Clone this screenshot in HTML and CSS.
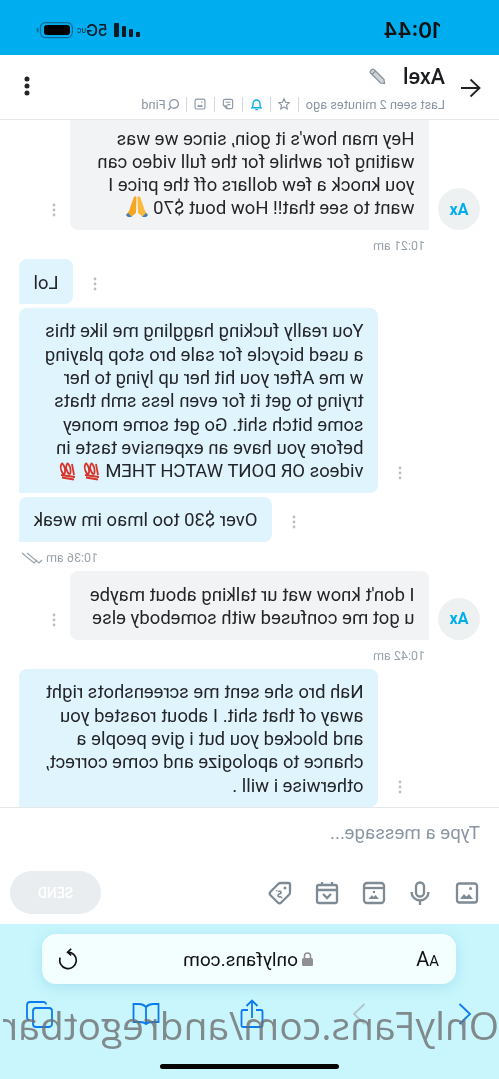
FILE: index.html
```html
<!DOCTYPE html>
<html lang="en">
<head>
    <meta charset="UTF-8">
    <meta name="viewport" content="width=device-width, initial-scale=1.0">
    <title>Axel - Chat</title>
    <link rel="stylesheet" href="styles.css">
</head>
<body>
<div class="phone">
    <div class="statusbar">
        <div class="clock">10:44</div>
        <div class="status-icons">
            <svg class="signal" width="27" height="14" viewBox="0 0 27 14"><rect x="0" y="9" width="4" height="5" rx="1"/><rect x="7" y="6" width="4" height="8" rx="1"/><rect x="14" y="3" width="4" height="11" rx="1"/><rect x="21" y="0" width="5" height="14" rx="1"/></svg>
            <div class="network">5G<span>UC</span></div>
            <svg class="battery" width="37" height="18" viewBox="0 0 37 18"><rect x="0.6" y="1.600" width="32" height="15" rx="5" fill="none" stroke="#0a6a96" stroke-width="1.100"/><rect x="3" y="4" width="26" height="10" rx="3" fill="#000"/><path d="M34.500 6.500c1.500.5 2 1.500 2 2.500s-.5 2-2 2.500z" fill="#0a6a96"/></svg>
        </div>
    </div>

    <div class="chat-header">
        <svg class="back" width="24" height="24" viewBox="0 0 24 24"><path d="M2 12h19M11.500 3.500 2.500 12l9 8.500" fill="none" stroke="#222" stroke-width="1.800"/></svg>
        <div class="who">
            <div class="name-row">
                <span class="name">Axel</span>
                <svg width="18" height="18" viewBox="0 0 18 18"><path d="M2 12.500 12 2.500a1.500 1.500 0 0 1 2 0l1.500 1.500a1.500 1.500 0 0 1 0 2l-10 10-4 .5zM10.500 4l3.500 3.500" fill="#cfd4d8" stroke="#8a9299" stroke-width="1.200"/></svg>
            </div>
            <div class="meta">
                <span class="seen">Last seen 2 minutes ago</span>
                <span class="meta-item"><svg width="14" height="14" viewBox="0 0 24 24"><path d="m12 3 2.700 6 6.300.7-4.700 4.300 1.300 6.500-5.600-3.300-5.600 3.300 1.300-6.500L3 9.700 9.300 9z" fill="none" stroke="#8a96a3" stroke-width="2"/></svg></span>
                <span class="meta-item"><svg width="15" height="16" viewBox="0 0 24 24"><path d="M5 18c1.500-2 1.500-4 1.500-7a5.500 5.500 0 0 1 11 0c0 3 0 5 1.500 7zM10 21h4" fill="none" stroke="#00aeef" stroke-width="2.200"/></svg></span>
                <span class="meta-item"><svg width="14" height="14" viewBox="0 0 24 24"><path d="M4 7a3 3 0 0 1 3-3h10a3 3 0 0 1 3 3v7l-6 6H7a3 3 0 0 1-3-3zM8 9h8M8 13h5M14 20v-5h6" fill="none" stroke="#8a96a3" stroke-width="2"/></svg></span>
                <span class="meta-item"><svg width="14" height="14" viewBox="0 0 24 24"><rect x="3.500" y="3.500" width="17" height="17" rx="3" fill="none" stroke="#8a96a3" stroke-width="2"/><path d="m7 17 3-4 2 2 2-2 3 4z" fill="#8a96a3"/><circle cx="9" cy="8.500" r="1.300" fill="#8a96a3"/></svg></span>
                <span class="meta-item find"><svg width="13" height="13" viewBox="0 0 24 24"><circle cx="11" cy="11" r="8" fill="none" stroke="#8a96a3" stroke-width="2.500"/><path d="m17 17 5 5" stroke="#8a96a3" stroke-width="2.500"/></svg>Find</span>
            </div>
        </div>
        <svg class="more" width="6" height="20" viewBox="0 0 6 20"><circle cx="3" cy="3" r="2.500"/><circle cx="3" cy="10" r="2.500"/><circle cx="3" cy="17" r="2.500"/></svg>
    </div>

    <div class="messages">
        <div class="msg incoming first">
            <div class="avatar">Ax</div>
            <div class="bubble">Hey man how's it goin, since we was waiting for awhile for the full video can you knock a few dollars off the price I want to see that!! How bout $70
                <svg class="emoji" width="24" height="24" viewBox="0 0 24 24"><path d="M11.500 3c-1-1.500-2.500-.5-3 1L4 17l-3 4 2 2h3l5-4z" fill="#f9b93c"/><path d="M12.500 3c1-1.500 2.500-.5 3 1L20 17l3 4-2 2h-3l-5-4z" fill="#f5a623"/><path d="m1 21 2-2 4 4H3zM23 21l-2-2-4 4h4z" fill="#3f7fc4"/></svg>
            </div>
            <svg class="dots" width="4" height="14" viewBox="0 0 4 14"><circle cx="2" cy="2" r="1.400"/><circle cx="2" cy="7" r="1.400"/><circle cx="2" cy="12" r="1.400"/></svg>
        </div>
        <div class="time incoming-time">10:21 am</div>

        <div class="msg outgoing">
            <svg class="dots" width="4" height="14" viewBox="0 0 4 14"><circle cx="2" cy="2" r="1.400"/><circle cx="2" cy="7" r="1.400"/><circle cx="2" cy="12" r="1.400"/></svg>
            <div class="bubble">Lol</div>
        </div>
        <div class="msg outgoing">
            <svg class="dots" width="4" height="14" viewBox="0 0 4 14"><circle cx="2" cy="2" r="1.400"/><circle cx="2" cy="7" r="1.400"/><circle cx="2" cy="12" r="1.400"/></svg>
            <div class="bubble wide">You really fucking haggling me like this a used bicycle for sale bro stop playing w me After you hit her up lying to her trying to get it for even less smh thats some bitch shit. Go get some money before you have an expensive taste in videos OR DONT WATCH THEM
                <svg class="emoji" width="24" height="20" viewBox="0 0 22 20"><path d="M4 3 2 14M7 4c-2 3-2 9-.5 9S11 7 9.500 4 8 3 7 4zM12.500 4c-2 3-2 9-.5 9s4.500-6 3-9-1.500-1-2.500 0zM1 16l14-2M2 18.500l12-2" fill="none" stroke="#d8352a" stroke-width="1.800"/></svg><svg class="emoji" width="24" height="20" viewBox="0 0 22 20"><path d="M4 3 2 14M7 4c-2 3-2 9-.5 9S11 7 9.500 4 8 3 7 4zM12.500 4c-2 3-2 9-.5 9s4.500-6 3-9-1.500-1-2.500 0zM1 16l14-2M2 18.500l12-2" fill="none" stroke="#d8352a" stroke-width="1.800"/></svg>
            </div>
        </div>
        <div class="msg outgoing">
            <svg class="dots" width="4" height="14" viewBox="0 0 4 14"><circle cx="2" cy="2" r="1.400"/><circle cx="2" cy="7" r="1.400"/><circle cx="2" cy="12" r="1.400"/></svg>
            <div class="bubble">Over $30 too lmao im weak</div>
        </div>
        <div class="time outgoing-time">10:36 am
            <svg width="22" height="12" viewBox="0 0 22 12"><path d="M21 1 9 11 6 8M16 1 4 11 1 8" fill="none" stroke="#9aa3ab" stroke-width="1.200"/></svg>
        </div>

        <div class="msg incoming">
            <div class="avatar">Ax</div>
            <div class="bubble">I don't know wat ur talking about maybe u got me confused with somebody else</div>
            <svg class="dots" width="4" height="14" viewBox="0 0 4 14"><circle cx="2" cy="2" r="1.400"/><circle cx="2" cy="7" r="1.400"/><circle cx="2" cy="12" r="1.400"/></svg>
        </div>
        <div class="time incoming-time">10:42 am</div>

        <div class="msg outgoing">
            <svg class="dots" width="4" height="14" viewBox="0 0 4 14"><circle cx="2" cy="2" r="1.400"/><circle cx="2" cy="7" r="1.400"/><circle cx="2" cy="12" r="1.400"/></svg>
            <div class="bubble wide">Nah bro she sent me screenshots right away of that shit. I about roasted you and blocked you but i give people a chance to apologize and come correct, otherwise i will .</div>
        </div>
    </div>

    <div class="composer">
        <div class="placeholder">Type a message...</div>
        <div class="composer-tools">
            <div class="tool-icons">
                <svg width="24" height="24" viewBox="0 0 24 24"><rect x="2" y="2.500" width="20" height="19" rx="2.500"/><path class="fill" d="m6 18 4-5 2.500 2.500L15 13l4 5z"/><circle class="fill" cx="8.500" cy="7.500" r="1.500"/></svg>
                <svg width="24" height="24" viewBox="0 0 24 24"><rect x="8" y="1.500" width="8" height="14" rx="4"/><path d="M3.500 11a8.500 8.500 0 0 0 17 0M12 19.500V24"/></svg>
                <svg width="24" height="24" viewBox="0 0 24 24"><rect x="2" y="2" width="20" height="20" rx="3"/><path d="M2 7h20"/><path class="fill" d="m7 18 3.500-4 2 2 1.500-2 3.500 4z"/><circle class="fill" cx="12" cy="11" r="1.200"/></svg>
                <svg width="24" height="24" viewBox="0 0 24 24"><rect x="2" y="4" width="20" height="18" rx="2"/><path d="M2 9h20M7 1v3M17 1v3M8 13l4 4 4-4"/></svg>
                <svg width="26" height="26" viewBox="0 0 26 26"><path d="M3 4.500C3 3.500 3.500 3 4.500 3h8c1 0 1.500.3 2 .8l8 8c1.200 1.200 1.200 2.200 0 3.400l-7.300 7.300c-1.200 1.200-2.200 1.200-3.400 0l-8-8c-.5-.5-.8-1-.8-2z"/><circle class="fill" cx="8" cy="8" r="1.500"/><path d="M14.800 11.800c-1-1-3-.5-2.800 1s2.800 1 3 2.500-2 2-3 1M11 18l.8-.8M15.800 11.200l.8-.8" stroke-width="1.700"/></svg>
            </div>
            <div class="send">SEND</div>
        </div>
    </div>

    <div class="browser">
        <div class="urlbar">
            <div class="aa"><small>A</small>A</div>
            <div class="address"><svg width="11" height="14" viewBox="0 0 11 14"><path d="M2.500 6V4a3 3 0 0 1 6 0v2" fill="none" stroke="#8f8f94" stroke-width="1.500"/><rect x="0" y="6" width="11" height="8" rx="1.500" fill="#8f8f94"/></svg>onlyfans.com</div>
            <svg class="reload" width="22" height="22" viewBox="0 0 24 24"><path d="M12 4.500a9 9 0 1 0 8.500 6M8.500 1l4 3.500-4 3.500" fill="none" stroke="#111" stroke-width="1.800"/></svg>
        </div>
        <div class="toolbar">
            <div class="tool"><svg width="14" height="24" viewBox="0 0 14 24"><path d="M12.500 2 2 12l10.500 10" fill="none" stroke="#0a7bf0" stroke-width="1.800"/></svg></div>
            <div class="tool"><svg width="14" height="24" viewBox="0 0 14 24"><path d="M1.500 2 12 12 1.500 22" fill="none" stroke="#b3c4c9" stroke-width="1.800"/></svg></div>
            <div class="tool"><svg width="24" height="30" viewBox="0 0 24 30"><path d="M12 19V2M6.500 7 12 1.500 17.500 7M8 11H3a1.500 1.500 0 0 0-1.500 1.500v14A1.500 1.500 0 0 0 3 28h18a1.500 1.500 0 0 0 1.500-1.500v-14A1.500 1.500 0 0 0 21 11h-5" fill="none" stroke="#0a7bf0" stroke-width="1.800"/></svg></div>
            <div class="tool"><svg width="28" height="24" viewBox="0 0 28 24"><path d="M14 5c-2-2-4-3-7-3H1.500v18H8c3 0 5 1 6 2 1-1 3-2 6-2h6.500V2H21c-3 0-5 1-7 3zM14 5v17" fill="none" stroke="#0a7bf0" stroke-width="1.800"/></svg></div>
            <div class="tool"><svg width="27" height="27" viewBox="0 0 27 27"><rect x="1" y="7" width="19" height="19" rx="3" fill="none" stroke="#0a7bf0" stroke-width="1.800"/><path d="M7 3.500A2.500 2.500 0 0 1 9.500 1H23a3 3 0 0 1 3 3v12.500a2.500 2.500 0 0 1-2.500 2.500" fill="none" stroke="#0a7bf0" stroke-width="1.800"/></svg></div>
        </div>
        <div class="home-bar"></div>
        <div class="watermark">OnlyFans.com/andregotbar</div>
    </div>
</div>
</body>
</html>
```

FILE: styles.css
```css
html, body {
    margin: 0;
    padding: 0;
    background: #fff;
}

/* the whole capture is flipped left to right */
.phone {
    width: 499px;
    height: 1079px;
    overflow: hidden;
    display: flex;
    flex-direction: column;
    font-family: Roboto, "Liberation Sans", sans-serif;
    color: #242529;
    transform: scaleX(-1);
}

.statusbar {
    height: 55px;
    flex-shrink: 0;
    background: #00aeef;
    display: flex;
    align-items: center;
    justify-content: space-between;
    padding: 5px 26px 0 58px;
    box-sizing: border-box;
}

.clock {
    font-family: Inter, sans-serif;
    font-size: 21px;
    font-weight: 600;
    color: #111;
}

.status-icons {
    display: flex;
    align-items: center;
    gap: 6px;
    margin-right: 10px;
}

.signal {
    fill: #0b1c26;
    margin-right: -1px;
}

.network {
    font-family: Inter, sans-serif;
    font-size: 16px;
    font-weight: 500;
    color: #0b1c26;
    display: flex;
    align-items: center;
}

.network span {
    font-size: 6px;
    width: 7px;
}

.chat-header {
    height: 65px;
    flex-shrink: 0;
    display: flex;
    align-items: center;
    padding: 0 24px 0 17px;
    box-sizing: border-box;
    border-bottom: 1px solid #e6e9eb;
}

.back {
    margin-right: 13px;
    margin-top: 2px;
}

.who {
    flex: 1;
}

.name-row {
    display: flex;
    align-items: center;
    gap: 17px;
    height: 27px;
}

.name {
    font-size: 21.500px;
    font-weight: 500;
    color: #1c1d20;
}

.meta {
    display: flex;
    align-items: center;
    font-size: 12.800px;
    color: #8a96a3;
    margin-top: 7px;
}

.seen {
    padding-right: 7px;
}

.meta-item {
    display: flex;
    align-items: center;
    justify-content: center;
    box-sizing: border-box;
    width: 28px;
    height: 15px;
    border-left: 1px solid #d4d9dd;
}

.find {
    width: auto;
    padding-left: 6px;
    gap: 1px;
}

.more {
    fill: #242529;
    margin-top: -2px;
}

.messages {
    height: 687px;
    flex-shrink: 0;
    overflow: hidden;
    display: flex;
    flex-direction: column;
}

.msg {
    display: flex;
    flex-shrink: 0;
    align-items: flex-end;
}

.msg.first {
    margin-top: -5px;
}

.bubble {
    font-size: 18.500px;
    line-height: 23.300px;
    padding: 12.500px 14.500px 9.500px;
    box-sizing: border-box;
}

/* keep the pictures from stretching their line */
.emoji {
    vertical-align: -4px;
    margin-top: -6px;
}

.dots {
    fill: #b8bfc5;
    flex-shrink: 0;
    margin-bottom: 13px;
}

.incoming {
    padding-left: 19px;
}

.avatar {
    width: 42px;
    height: 42px;
    flex-shrink: 0;
    border-radius: 50%;
    background: #eef1f2;
    color: #00aeef;
    font-size: 16px;
    font-weight: 700;
    display: flex;
    align-items: center;
    justify-content: center;
    margin-right: 9px;
}

.incoming .bubble {
    width: 359px;
    background: #f1f3f4;
    border-radius: 8px 8px 8px 0;
}

.incoming .dots {
    margin-left: 14px;
}

.outgoing {
    justify-content: flex-end;
    padding-right: 19px;
    margin-bottom: 3.500px;
}

.outgoing .bubble {
    background: #dff4fd;
    border-radius: 8px 8px 0 8px;
}

.outgoing .bubble.wide {
    width: 359px;
}

.outgoing .dots {
    margin-right: 20px;
}

.time {
    font-size: 12.500px;
    line-height: 14px;
    color: #9aa3ab;
    flex-shrink: 0;
}

.incoming-time {
    padding-left: 74px;
    margin: 9px 0 6px;
}

.outgoing-time {
    display: flex;
    justify-content: flex-end;
    align-items: center;
    gap: 3px;
    padding-right: 21px;
    margin: 6px 0 6px;
}

.composer {
    height: 117px;
    flex-shrink: 0;
    box-sizing: border-box;
    border-top: 1px solid #e6e9eb;
    padding: 14px 10px 0 19px;
    background: #fff;
}

.placeholder {
    font-size: 18.700px;
    color: #8a96a3;
    line-height: 22px;
}

.composer-tools {
    display: flex;
    align-items: center;
    justify-content: space-between;
    margin-top: 27px;
}

.tool-icons {
    display: flex;
    align-items: center;
    gap: 22.500px;
    margin-left: 1px;
}

.tool-icons svg {
    fill: none;
    stroke: #7e8a94;
    stroke-width: 2.300;
}

.tool-icons .fill {
    fill: #7e8a94;
    stroke: none;
}

.send {
    width: 91px;
    height: 43px;
    border-radius: 22px;
    background: #e9edef;
    color: #fff;
    font-size: 14px;
    font-weight: 500;
    display: flex;
    align-items: center;
    justify-content: center;
}

.browser {
    flex: 1;
    position: relative;
    background: #c8f6fc;
    padding: 10px 42px 0 43px;
}

.urlbar {
    height: 50px;
    border-radius: 14px;
    background: #f3feff;
    box-shadow: 0 3px 14px rgba(80, 170, 210, 0.25);
    display: grid;
    grid-template-columns: 1fr auto 1fr;
    align-items: center;
    padding: 0 15px 0 17px;
}

.address {
    display: flex;
    align-items: center;
    gap: 4px;
    font-size: 19px;
    color: #111;
}

.aa {
    font-size: 20px;
    color: #111;
}

.aa small {
    font-size: 15px;
}

.reload {
    justify-self: end;
}

.toolbar {
    display: flex;
    align-items: center;
    justify-content: space-between;
    height: 30px;
    margin: 15px -22px 0 -29px;
}

.tool {
    width: 40px;
    display: flex;
    justify-content: center;
}

.home-bar {
    position: absolute;
    left: 160px;
    bottom: 10px;
    width: 179px;
    height: 5px;
    border-radius: 3px;
    background: #050505;
}

.watermark {
    position: absolute;
    left: 0;
    top: 74px;
    font-family: "Open Sans", sans-serif;
    font-size: 38.900px;
    white-space: nowrap;
    color: rgba(110, 110, 110, 0.8);
}
```
